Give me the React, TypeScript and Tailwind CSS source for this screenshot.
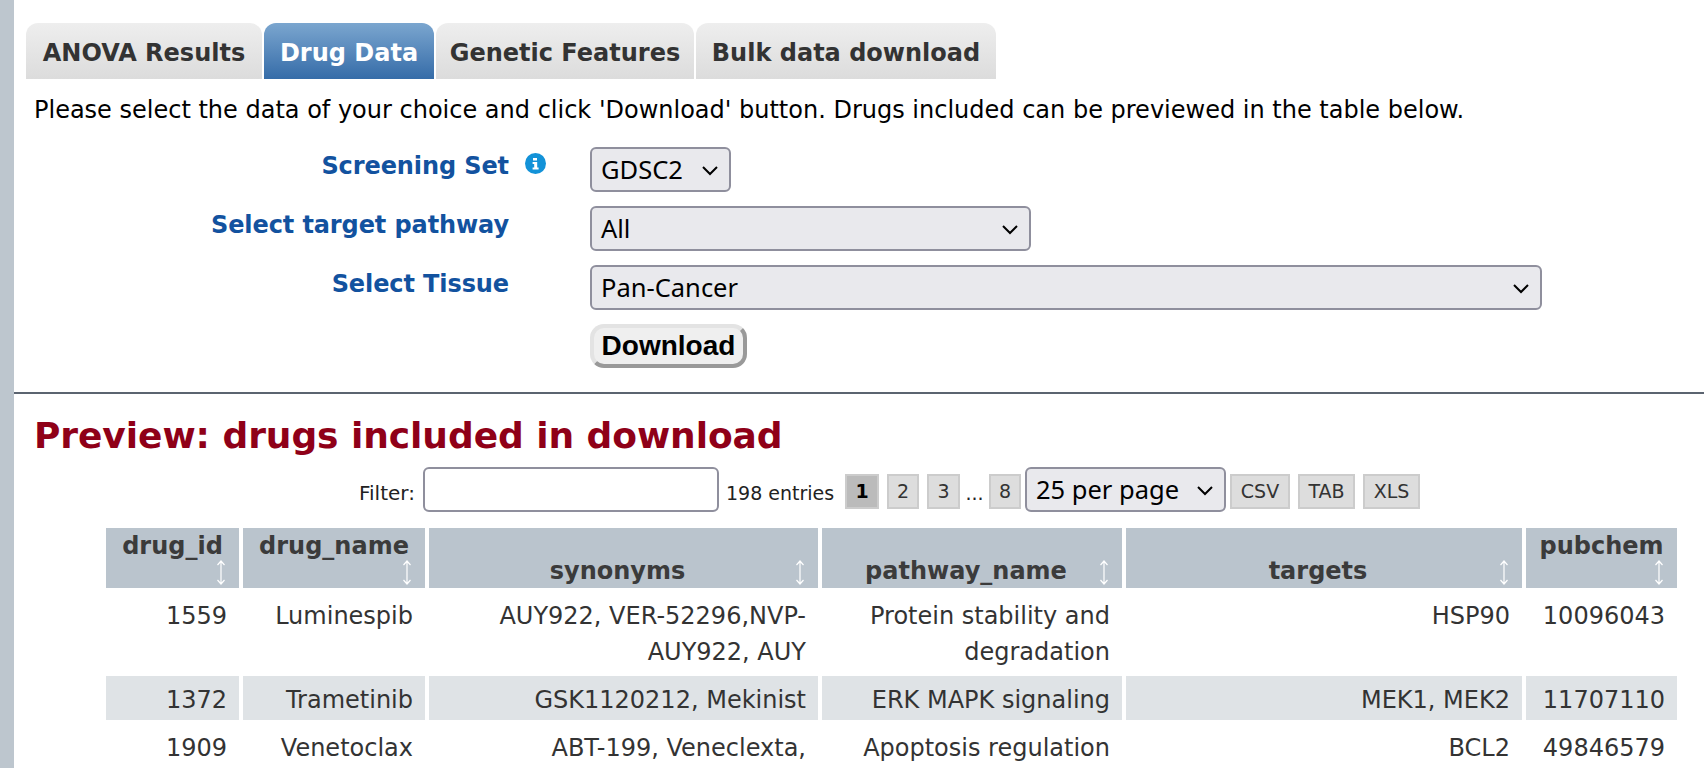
import type { ReactNode } from "react"

const tabs = [
  { label: "ANOVA Results", width: "w-[236px]" },
  { label: "Drug Data", width: "w-[170px]", active: true },
  { label: "Genetic Features", width: "w-[258px]" },
  { label: "Bulk data download", width: "w-[300px]" },
]

const rows = [
  { id: "1559", name: "Luminespib", syn: "AUY922, VER-52296,NVP-AUY922, AUY", path: "Protein stability and degradation", target: "HSP90", pub: "10096043" },
  { id: "1372", name: "Trametinib", syn: "GSK1120212, Mekinist", path: "ERK MAPK signaling", target: "MEK1, MEK2", pub: "11707110" },
  { id: "1909", name: "Venetoclax", syn: "ABT-199, Veneclexta,", path: "Apoptosis regulation", target: "BCL2", pub: "49846579" },
]

const columns = [
  { label: "drug_id", width: "w-[133px]", stacked: true },
  { label: "drug_name", width: "w-[182px]", stacked: true },
  { label: "synonyms", width: "w-[389px]" },
  { label: "pathway_name", width: "w-[300px]" },
  { label: "targets", width: "w-[396px]" },
  { label: "pubchem", width: "w-[151px]", stacked: true },
]

function SortIcon() {
  return (
    <svg width="12" height="25" viewBox="0 0 12 25" fill="none" stroke="#ffffff" strokeWidth="1.2" className="block shrink-0">
      <path d="M6 1v23M2.5 5L6 1l3.5 4M2.5 20L6 24l3.5-4" />
    </svg>
  )
}

function InfoIcon() {
  return (
    <svg width="21" height="21" viewBox="0 0 21 21" className="block">
      <circle cx="10.5" cy="10.5" r="10.5" fill="#1392d8" />
      <path d="M8 5h4v2.6H8zM7.6 9h4.6v5.6h1.4V16.6H7.6v-2h1.6v-3.6H7.6z" fill="#ffffff" />
    </svg>
  )
}

function Chevron() {
  return (
    <svg width="18" height="11" viewBox="0 0 18 11" fill="none" stroke="#000000" strokeWidth="2" className="mt-[2px] block">
      <path d="M2 2l7 7 7-7" />
    </svg>
  )
}

function Select({ value, className }: { value: string; className: string }) {
  return (
    <div className={`flex h-[45px] items-center justify-between rounded-[6px] border-2 border-[#8f8f9d] bg-[#e9e9ed] pl-[9px] pr-[10px] font-['Noto_Sans',sans-serif] text-[25.5px] text-black ${className}`}>
      {value}
      <Chevron />
    </div>
  )
}

function PageButton({ children, className = "" }: { children: ReactNode; className?: string }) {
  return (
    <span className={`mt-[7px] flex h-[35px] items-center justify-center border-2 border-[#cccccc] text-[19px] ${className}`}>
      {children}
    </span>
  )
}

function FormRow({ label, info, children }: { label: string; info?: boolean; children: ReactNode }) {
  return (
    <div className="flex h-[45px]">
      <div className="w-[495px] pt-[1px] text-right text-[24px] leading-[36px] font-bold tracking-[-0.1px] text-[#12529f]">{label}</div>
      <div className="w-[81px] pl-[16px] pt-[6px]">{info && <InfoIcon />}</div>
      {children}
    </div>
  )
}

export default function App() {
  return (
    <div className="flex h-[768px] w-[1704px] overflow-hidden bg-white font-['DejaVu_Sans',sans-serif]">
      <div className="w-[14px] shrink-0 bg-[#bdc6ce]" />
      <div className="min-w-0 flex-1">
        <div className="flex gap-[2px] pl-[12px] pt-[23px]">
          {tabs.map((t) => (
            <div
              key={t.label}
              className={`flex h-[56px] items-center justify-center rounded-t-[12px] bg-gradient-to-b pt-[3px] text-[24px] font-bold ${t.width} ${
                t.active ? "from-[#7ba6cf] to-[#356ca8] text-white" : "from-[#eeeeee] to-[#dcdcdc] text-[#333333]"
              }`}
            >
              {t.label}
            </div>
          ))}
        </div>

        <p className="pl-[20px] pt-[13px] text-[24px] leading-[36px] text-black">
          Please select the data of your choice and click 'Download' button. Drugs included can be previewed in the table below.
        </p>

        <div className="mt-[19px] flex flex-col gap-[14px]">
          <FormRow label="Screening Set" info>
            <Select value="GDSC2" className="w-[141px]" />
          </FormRow>
          <FormRow label="Select target pathway">
            <Select value="All" className="w-[441px]" />
          </FormRow>
          <FormRow label="Select Tissue">
            <Select value="Pan-Cancer" className="w-[952px]" />
          </FormRow>
          <div className="flex h-[45px] pl-[576px]">
            <div className="flex h-[44px] w-[157px] items-center justify-center rounded-[14px] border-[4px] border-t-[#e3e3e3] border-l-[#e3e3e3] border-r-[#999999] border-b-[#999999] bg-[#efefef] font-['Liberation_Sans',sans-serif] text-[28px] font-bold text-black">
              Download
            </div>
          </div>
        </div>

        <div className="mt-[23px] h-[2px] bg-[#5b6470]" />

        <h1 className="pl-[20px] pt-[18px] text-[36px] leading-[48px] font-bold tracking-[-0.06px] text-[#8f0018]">Preview: drugs included in download</h1>

        <div className="mt-[7px] flex h-[45px] items-start pl-[345px] text-[19px] text-[#222222]">
          <span className="w-[64px] pt-[8px] text-[20px] leading-[36px]">Filter:</span>
          <div className="h-[45px] w-[296px] rounded-[6px] border-2 border-[#8f8f9d] bg-white" />
          <span className="ml-[7px] w-[119px] pt-[8px] leading-[36px]">198 entries</span>
          <PageButton className="w-[34px] bg-[#bbbbbb] font-bold text-black">1</PageButton>
          <PageButton className="ml-[8px] w-[32px] bg-[#dddddd] text-[#333333]">2</PageButton>
          <PageButton className="ml-[8px] w-[33px] bg-[#dddddd] text-[#333333]">3</PageButton>
          <span className="w-[29px] pt-[8px] text-center leading-[36px]">...</span>
          <PageButton className="w-[32px] bg-[#dddddd] text-[#333333]">8</PageButton>
          <Select value="25 per page" className="ml-[4px] w-[201px]" />
          <PageButton className="ml-[4px] w-[60px] bg-[#dddddd] text-[#333333]">CSV</PageButton>
          <PageButton className="ml-[8px] w-[57px] bg-[#dddddd] text-[#333333]">TAB</PageButton>
          <PageButton className="ml-[8px] w-[57px] bg-[#dddddd] text-[#333333]">XLS</PageButton>
        </div>

        <table className="ml-[88px] mt-[12px] w-[1579px] table-fixed border-separate border-spacing-[4px] text-[24px] text-[#333333]">
          <thead>
            <tr>
              {columns.map((c) => (
                <th key={c.label} className={`${c.width} h-[60px] bg-[#bac4cd] px-[12px] pb-[3px] align-bottom`}>
                  {c.stacked ? (
                    <div className="flex flex-col items-end">
                      <span className="mb-[-4px] self-center leading-[36px] whitespace-nowrap text-[#3b3b3b]">{c.label}</span>
                      <SortIcon />
                    </div>
                  ) : (
                    <div className="flex items-end">
                      <span className="flex-1 text-center leading-[28px] text-[#3b3b3b]">{c.label}</span>
                      <SortIcon />
                    </div>
                  )}
                </th>
              ))}
            </tr>
          </thead>
          <tbody>
            {rows.map((r, i) => (
              <tr key={r.id} className={i % 2 === 1 ? "[&>td]:bg-[#dfe3e6]" : ""}>
                {[r.id, r.name, r.syn, r.path, r.target, r.pub].map((v, j) => (
                  <td key={j} className="px-[12px] pt-[6px] pb-[2px] text-right align-top leading-[36px]">
                    {v}
                  </td>
                ))}
              </tr>
            ))}
          </tbody>
        </table>
      </div>
    </div>
  )
}
